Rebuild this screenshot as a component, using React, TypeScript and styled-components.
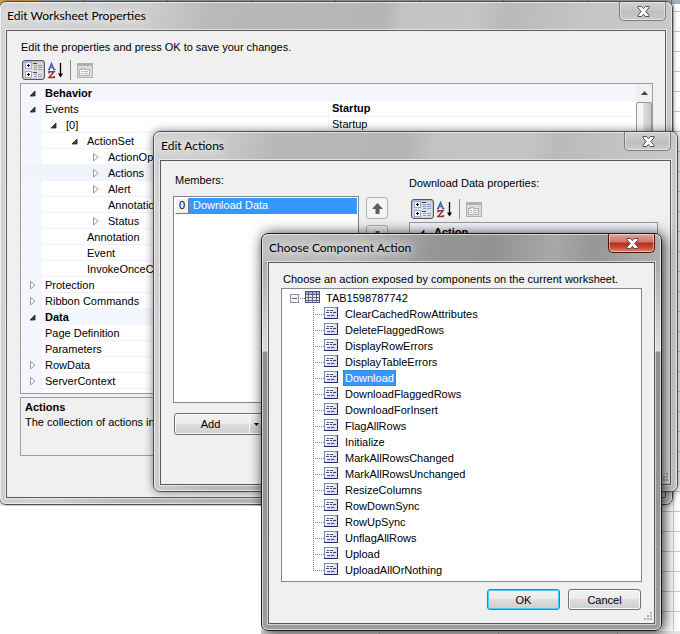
import React from 'react';
import styled, { createGlobalStyle, css } from 'styled-components';

const Global = createGlobalStyle`
  *, *::before, *::after { box-sizing: border-box; }
  body {
    margin: 0;
    font: 11px/14px "Liberation Sans", Arial, sans-serif;
    color: #000;
    overflow: hidden;
  }
  button { font: inherit; color: inherit; padding: 0; margin: 0; }
  ul { list-style: none; margin: 0; padding: 0; }
  svg { display: block; flex: none; }
`;

/* ---------- desktop ---------- */

const Desktop = styled.main`
  position: relative;
  min-height: 100vh;
  overflow: hidden;
  background:
    linear-gradient(#c3c8da, #c3c8da) calc(100% - 6px) 0 / 1px 100% no-repeat,
    repeating-linear-gradient(to bottom, #fff 0 11px, #c3c8da 11px 12px, #fff 12px 20px);
`;

const SheetHeader = styled.div`
  height: 4px;
  background:
    linear-gradient(to right, #e0a94e 0 40px, transparent 40px),
    repeating-linear-gradient(to right, #a3b0b8 0 83px, #6e7a82 83px 84px);
`;

const SheetBlank = styled.div`
  position: absolute;
  left: 0;
  top: 506px;
  bottom: 0;
  width: 261px;
  background: #fff;
`;

const SheetFooter = styled.div`
  position: absolute;
  left: 261px;
  right: 0;
  bottom: 0;
  height: 3px;
  background: repeating-linear-gradient(to right, #e4e4e4 0 118px, #bbb 118px 119px);
`;

/* ---------- window chrome ---------- */

type Layer = 'back' | 'middle' | 'front';

const layers = {
  back: css`
    left: -1px; right: 7px; top: 1px;
    border-color: #4c4c4c;
    background:
      linear-gradient(100deg, #d4d4d4 0, #cfcfcf 140px, #b9b9b9 210px, #b5b5b5 380px, #c3c3c3 400px, #c5c5c5 470px, #b9b9b9 500px, #c6c6c6 590px, #cbcbcb 100%);
    box-shadow: 0 0 5px rgba(0, 0, 0, 0.45);
  `,
  middle: css`
    left: 153px; right: 2px; top: 131px;
    border-color: #4c4c4c;
    background:
      linear-gradient(100deg, #d2d2d2 0, #cdcdcd 60px, #b8b8b8 120px, #b5b5b5 250px, #c3c3c3 280px, #c4c4c4 370px, #bababa 400px, #c5c5c5 480px, #cbcbcb 100%);
    box-shadow: 0 0 8px rgba(0, 0, 0, 0.5);
  `,
  front: css`
    left: 261px; right: 18px; top: 233px;
    border-color: #1c1c1c;
    background:
      linear-gradient(100deg, #bdbdbd 0, #b9b9b9 100px, #969696 170px, #929292 230px, #a8a8a8 290px, #969696 330px, #b0b0b0 100%) 0 0 / 100% 28px no-repeat,
      linear-gradient(to bottom, #adadad 28px, #dcdcdc 117px, #8f8f8f 118px, #9d9d9d 100%);
    box-shadow: 2px 1px 14px rgba(0, 0, 0, 0.85);
  `,
};

const Frame = styled.section<{ $layer: Layer }>`
  position: absolute;
  display: flex;
  flex-direction: column;
  border: 1px solid;
  border-radius: 7px;
  ${(p) => layers[p.$layer]}
`;

const FrameInner = styled.div`
  display: flex;
  flex-direction: column;
  padding: 0 6px 6px;
  border-radius: 6px;
  box-shadow: inset 0 0 0 1px rgba(255, 255, 255, 0.6);
`;

const TitleBar = styled.header`
  display: flex;
  justify-content: space-between;
  align-items: flex-start;
  height: 28px;
  padding-left: 1px;
`;

const Title = styled.h1`
  margin: 0;
  font: 12px/28px Lato, "Open Sans", sans-serif;
  text-shadow: 0 0 8px #fff, 0 0 10px #fff;
  white-space: nowrap;
`;

const CloseButton = styled.button<{ $active?: boolean }>`
  display: flex;
  align-items: center;
  justify-content: center;
  width: 47px;
  height: 19px;
  padding-left: 2px;
  border: 1px solid ${(p) => (p.$active ? '#4a1812' : '#7d7d7d')};
  border-top: 0;
  border-radius: 0 0 5px 5px;
  background: ${(p) =>
    p.$active
      ? 'linear-gradient(#e0a296 0, #cf7565 8px, #b5301a 9px, #c8442c 13px, #e08a6c 18px)'
      : 'linear-gradient(#cfcfcf, #c4c4c4 50%, #bebebe 51%, #cbcbcb)'};
  box-shadow: inset 0 0 0 1px rgba(255, 255, 255, 0.45);
`;

const Client = styled.div`
  position: relative;
  display: flex;
  flex-direction: column;
  border: 1px solid #5a5a5a;
  outline: 1px solid rgba(255, 255, 255, 0.55);
  background: #f0f0f0;
`;

const Grip = styled.svg`
  position: absolute;
  right: 1px;
  bottom: 1px;
`;

const CloseGlyph = () => (
  <svg width="13" height="11" viewBox="0 0 13 11">
    <path d="M1 .5h3.600l1.900 2.200L8.400.5H12v1.300L8.800 5.500 12 9.200v1.300H8.400L6.500 8.300 4.600 10.500H1V9.200l3.200-3.700L1 1.800z" fill="#fff" stroke="#4b5060" strokeWidth="1" strokeLinejoin="round" />
  </svg>
);

const SizeGrip = () => (
  <Grip width="10" height="10" viewBox="0 0 10 10" fill="#b0b0b0">
    <path d="M7 0h2v2H7zM4 3h2v2H4zM7 3h2v2H7zM1 6h2v2H1zM4 6h2v2H4zM7 6h2v2H7z" />
  </Grip>
);

function Dialog(props: { layer: Layer; title: string; grip?: boolean; children: React.ReactNode }) {
  return (
    <Frame $layer={props.layer} role="dialog" aria-label={props.title}>
      <FrameInner>
        <TitleBar>
          <Title>{props.title}</Title>
          <CloseButton $active={props.layer === 'front'} aria-label="Close">
            <CloseGlyph />
          </CloseButton>
        </TitleBar>
        <Client>
          {props.children}
          {props.grip && <SizeGrip />}
        </Client>
      </FrameInner>
    </Frame>
  );
}

/* ---------- property toolbar ---------- */

const Toolbar = styled.div`
  display: flex;
  align-items: center;
  height: 20px;
  padding-left: 2px;
`;

const ToolButton = styled.button<{ $pressed?: boolean }>`
  display: flex;
  align-items: center;
  justify-content: center;
  width: 23px;
  height: 20px;
  border: 1px solid ${(p) => (p.$pressed ? '#55585c' : 'transparent')};
  border-radius: 3px;
  background: ${(p) => (p.$pressed ? 'linear-gradient(#d2d2d2, #ececec)' : 'transparent')};
  box-shadow: ${(p) => (p.$pressed ? 'inset 0 0 2px #777' : 'none')};
`;

const ToolDivider = styled.span`
  width: 1px;
  height: 20px;
  margin: 0 2px;
  background: #8c8c8c;
`;

const PropertyToolbar = () => (
  <Toolbar role="toolbar">
    <ToolButton $pressed aria-label="Categorized">
      <svg width="17" height="16" viewBox="0 0 17 16" shapeRendering="crispEdges">
        <path d="M.5.500h6v6h-6zM.5 9.500h6v6h-6z" fill="#fff" stroke="#8fb0dc" />
        <path d="M2 3.500h3M3.500 2v3M2 12.500h3M3.500 11v3" stroke="#000" />
        <path d="M8 1.500h4M8 10.500h4" stroke="#444" />
        <path d="M9 3.500h3M13 3.500h4M9 5.500h3M13 5.500h4M9 7.500h3M13 7.500h4M9 12.500h3M13 12.500h4M9 14.500h3M13 14.500h4" stroke="#8b9fc2" />
      </svg>
    </ToolButton>
    <ToolButton aria-label="Alphabetical">
      <svg width="19" height="17" viewBox="0 0 19 17" fill="none">
        <path d="M2 7.500 4.500 1.500l2.500 6M3 5.500h3M1 7.500h2M6 7.500h2.500" stroke="#3d62ad" strokeWidth="1.400" />
        <path d="M2 11.500V9.700h5L2 15.600h5.300V14" stroke="#9c2f35" strokeWidth="1.500" />
        <path d="M13.500 1v12" stroke="#000" strokeWidth="1.300" />
        <path d="M11 11.500h5l-2.500 4z" fill="#000" />
      </svg>
    </ToolButton>
    <ToolDivider />
    <ToolButton aria-label="Property Pages" disabled>
      <svg width="16" height="15" viewBox="0 0 16 15" shapeRendering="crispEdges">
        <path d="M.5.500h15v14H.500z" fill="#dcdcdc" stroke="#b0b0b0" />
        <path d="M1 2h14" stroke="#b0b0b0" strokeWidth="2" />
        <path d="M2.500 6.500h2v-1h3v1h5v6h-10z" fill="#f3f3f3" stroke="#b0b0b0" />
        <path d="M4 8.500h2M7 8.500h4M4 10.500h2M7 10.500h4" stroke="#b8b8b8" />
      </svg>
    </ToolButton>
  </Toolbar>
);

/* ---------- property grid ---------- */

const GridBox = styled.div`
  display: flex;
  align-items: flex-start;
  border: 1px solid #9a9ca0;
  background: #f3f6fc;
  overflow: hidden;
`;

const MainGridBox = styled(GridBox)`
  height: 311px;
`;

const SideGridBox = styled(GridBox)`
  flex: 1;
`;

const PropTable = styled.table`
  flex: 1;
  margin-top: 1px;
  table-layout: fixed;
  border-spacing: 0;
`;

const Cell = styled.td<{ $tone: 'plain' | 'category' | 'selected' }>`
  height: 16px;
  padding: 0;
  border-bottom: 1px solid ${(p) => (p.$tone === 'category' ? '#f3f6fc' : '#eff3fa')};
  background: ${(p) => (p.$tone === 'plain' ? '#fff' : p.$tone === 'category' ? '#f3f6fc' : '#f1f4fa')};
  white-space: nowrap;
  overflow: hidden;
`;

const NameCell = styled(Cell)`
  width: 307px;
  ${(p) =>
    p.$tone === 'plain' &&
    css`
      background: linear-gradient(to right, #f3f6fc 21px, #fff 21px);
    `}
`;

const ValueCell = styled(Cell)<{ $bold?: boolean }>`
  padding-left: 3px;
  border-left: 1px solid #eff3fa;
  font-weight: ${(p) => (p.$bold ? 700 : 400)};
  line-height: 15px;
`;

const NameLine = styled.div<{ $depth: number; $bold?: boolean }>`
  display: flex;
  align-items: center;
  height: 15px;
  padding-left: ${(p) => 6 + p.$depth * 21}px;
  font-weight: ${(p) => (p.$bold ? 700 : 400)};
`;

const Toggle = styled.button`
  width: 12px;
  height: 12px;
  border: 0;
  background: none;
`;

const ToggleSlot = styled.span`
  display: flex;
  align-items: center;
  width: 18px;
  height: 15px;
`;

const Expander = ({ open }: { open: boolean }) => (
  <Toggle aria-expanded={open} aria-label={open ? 'Collapse' : 'Expand'}>
    <svg width="12" height="12" viewBox="0 0 12 12">
      {open ? (
        <path d="M3 9 8 4V9z" fill="#404040" stroke="#222" strokeWidth=".8" />
      ) : (
        <path d="M3.500 2.500v7.500L8 6.200z" fill="#fff" stroke="#9a9a9a" />
      )}
    </svg>
  </Toggle>
);

type Prop = { name: string; depth?: number; open?: boolean; kind?: 'category' | 'selected'; value?: string; strong?: boolean };

const properties: Prop[] = [
  { name: 'Behavior', open: true, kind: 'category' },
  { name: 'Events', open: true, value: 'Startup', strong: true },
  { name: '[0]', depth: 1, open: true, value: 'Startup' },
  { name: 'ActionSet', depth: 2, open: true },
  { name: 'ActionOptions', depth: 3, open: false },
  { name: 'Actions', depth: 3, open: false, kind: 'selected' },
  { name: 'Alert', depth: 3, open: false },
  { name: 'Annotation', depth: 3 },
  { name: 'Status', depth: 3, open: false },
  { name: 'Annotation', depth: 2 },
  { name: 'Event', depth: 2 },
  { name: 'InvokeOnceCondition', depth: 2 },
  { name: 'Protection', open: false },
  { name: 'Ribbon Commands', open: false },
  { name: 'Data', open: true, kind: 'category' },
  { name: 'Page Definition' },
  { name: 'Parameters' },
  { name: 'RowData', open: false },
  { name: 'ServerContext', open: false },
  { name: 'ServerActionID' },
];

const PropertyTable = ({ rows }: { rows: Prop[] }) => (
  <PropTable>
    <tbody>
      {rows.map((row, i) => {
        const tone = row.kind ?? 'plain';
        return (
          <tr key={i}>
            <NameCell $tone={tone}>
              <NameLine $depth={row.depth ?? 0} $bold={row.kind === 'category'}>
                <ToggleSlot>{row.open !== undefined && <Expander open={row.open} />}</ToggleSlot>
                {row.name}
              </NameLine>
            </NameCell>
            {row.kind === 'category' ? (
              <Cell $tone={tone} />
            ) : (
              <ValueCell $tone="plain" $bold={row.strong}>
                {row.value}
              </ValueCell>
            )}
          </tr>
        );
      })}
    </tbody>
  </PropTable>
);

const ScrollTrack = styled.div`
  display: flex;
  flex-direction: column;
  align-self: stretch;
  width: 16px;
  background: #f0f0f0;
`;

const ScrollArrow = styled.button`
  display: flex;
  align-items: center;
  justify-content: center;
  height: 18px;
  border: 0;
  background: none;
`;

const ScrollThumb = styled.div`
  flex: 0 0 120px;
  border: 1px solid #979797;
  border-radius: 2px;
  background: linear-gradient(to right, #f5f5f5 40%, #dcdcdc 50%, #c8c8c8);
`;

/* ---------- worksheet properties dialog ---------- */

const WorksheetBody = styled.div`
  display: flex;
  flex-direction: column;
  padding: 9px 12px 41px 13px;
`;

const Intro = styled.p`
  margin: 0 0 6px;
  padding-left: 1px;
`;

const ToolbarGap = styled.div`
  height: 3px;
`;

const HelpBox = styled.div`
  height: 59px;
  margin-top: 3px;
  padding: 2px 4px;
  border: 1px solid #9a9ca0;
  overflow: hidden;
`;

const HelpTitle = styled.h2`
  margin: 0;
  font-size: 11px;
  line-height: 14px;
`;

const HelpText = styled.p`
  margin: 0;
  line-height: 16px;
`;

/* ---------- edit actions dialog ---------- */

const ActionsBody = styled.div`
  display: grid;
  grid-template-columns: 186px 22px minmax(0, 1fr);
  column-gap: 7px;
  padding: 12px 12px 49px;
`;

const MembersColumn = styled.div`
  display: flex;
  flex-direction: column;
  align-items: flex-start;
`;

const MemberLabel = styled.span`
  padding-left: 2px;
  margin-bottom: 9px;
`;

const MemberList = styled.ul`
  &[role='listbox'] {
    align-self: stretch;
    height: 207px;
    padding: 1px;
    border: 1px solid #82858f;
  }
  background: #fff;
`;

const MemberItem = styled.li`
  display: flex;
  height: 16px;
  background: #3399ff;
  color: #fff;
  line-height: 15px;
`;

const MemberIndex = styled.span`
  width: 14px;
  margin-right: 4px;
  border: 1px solid;
  border-color: #fff #777 #777 #fff;
  background: #f0f0f0;
  color: #000;
  line-height: 13px;
  text-align: center;
`;

const raised = css`
  border: 1px solid #707070;
  border-radius: 3px;
  background: linear-gradient(#f2f2f2, #ebebeb 48%, #dddddd 50%, #cfcfcf);
  box-shadow: inset 0 0 0 1px #fbfbfb;
`;

const SplitButton = styled.div`
  display: flex;
  width: 89px;
  height: 22px;
  margin: 10px 0 0 1px;
  ${raised}
`;

const SplitMain = styled.button`
  flex: 1;
  padding-right: 3px;
  border: 0;
  background: none;
`;

const SplitArrow = styled.button`
  display: flex;
  align-items: center;
  justify-content: center;
  width: 13px;
  border: 0;
  border-left: 1px solid #fff;
  background: none;
`;

const MoveColumn = styled.div`
  display: flex;
  flex-direction: column;
  gap: 6px;
  padding-top: 24px;
`;

const MoveButton = styled.button`
  display: flex;
  align-items: center;
  justify-content: center;
  height: 22px;
  border: 1px solid #adb2b5;
  border-radius: 3px;
  background: #f4f4f4;
`;

const SideColumn = styled.div`
  display: flex;
  flex-direction: column;
  padding: 3px 0 0 14px;
`;

const SideLabel = styled.span`
  margin-bottom: 9px;
`;

/* ---------- component action dialog ---------- */

const ChooseBody = styled.div`
  display: flex;
  flex-direction: column;
  padding: 9px 12px 13px;
`;

const ChooseLabel = styled.span`
  padding-left: 2px;
  margin-bottom: 2px;
`;

const Tree = styled.ul`
  border: 1px solid #828790;
  background: #fff;

  &[role='tree'] {
    padding: 1px 0 3px 8px;
  }
`;

const TreeRow = styled.div`
  display: flex;
  align-items: center;
  height: 16px;
  line-height: 16px;
`;

const Branch = styled.ul`
  && {
    padding-left: 23px;
  }
`;

const NodeLabel = styled.span<{ $root?: boolean; $selected?: boolean }>`
  margin-left: ${(p) => (p.$root ? 3 : 4)}px;
  padding: 0 1px;
  border: 1px solid transparent;
  line-height: 14px;
  ${(p) =>
    p.$selected &&
    css`
      border: 1px dotted #b8641c;
      background: #3399ff;
      color: #fff;
    `}
`;

const DialogButtons = styled.div`
  display: flex;
  justify-content: flex-end;
  gap: 8px;
  margin-top: 7px;
  padding-right: 1px;
`;

const PushButton = styled.button<{ $default?: boolean }>`
  ${raised}
  width: 73px;
  height: 21px;
  ${(p) =>
    p.$default &&
    css`
      border-color: #3c7fb1;
      box-shadow: inset 0 0 0 1px #48d0f8;
    `}
`;

const RootIcon = () => (
  <svg width="31" height="16" viewBox="0 0 31 16" shapeRendering="crispEdges">
    <rect x=".5" y="4.500" width="8" height="8" rx="1" fill="#f4f4f4" stroke="#919191" />
    <path d="M2 8.500h5" stroke="#4b63a7" />
    <path d="M10 8.500h5" stroke="#808080" strokeDasharray="1 1" />
    <path d="M15.500 1.500h14v11h-14z" fill="#e8e8f2" stroke="#4f4f80" />
    <path d="M16 2h13v2H16z" fill="#a8a8ba" />
    <path d="M16 4.500h13M16 7.500h13M16 10.500h13M18.500 2v11M22.500 2v11M26.500 2v11" stroke="#62628e" />
  </svg>
);

const ActionIcon = ({ last }: { last: boolean }) => (
  <svg width="26" height="16" viewBox="0 0 26 16" shapeRendering="crispEdges">
    <path d={last ? 'M.500 0v9' : 'M.500 0v16'} stroke="#808080" strokeDasharray="1 1" />
    <path d="M2 8.500h9" stroke="#808080" strokeDasharray="1 1" />
    <path d="M12 2h12v11H12z" fill="#d3dcfa" />
    <path d="M12 2h10l-7 9h-3z" fill="#f6f8ff" />
    <path d="M11.500 13V1.500H24" fill="none" stroke="#8387bd" />
    <path d="M11 12.500h13.500M24.500 1v12" fill="none" stroke="#27275f" />
    <path d="M14 4.500h2M17 4.500h3M13 6.500h3M17 6.500h2M20 6.500h3M14 9.500h3M18 9.500h3" stroke="#44446c" />
  </svg>
);

const actions = [
  'ClearCachedRowAttributes', 'DeleteFlaggedRows', 'DisplayRowErrors', 'DisplayTableErrors', 'Download',
  'DownloadFlaggedRows', 'DownloadForInsert', 'FlagAllRows', 'Initialize', 'MarkAllRowsChanged',
  'MarkAllRowsUnchanged', 'ResizeColumns', 'RowDownSync', 'RowUpSync', 'UnflagAllRows', 'Upload',
  'UploadAllOrNothing',
];

export default function App() {
  return (
    <Desktop>
      <Global />
      <SheetHeader />

      <Dialog layer="back" title="Edit Worksheet Properties">
        <WorksheetBody>
          <Intro>Edit the properties and press OK to save your changes.</Intro>
          <PropertyToolbar />
          <ToolbarGap />
          <MainGridBox>
            <PropertyTable rows={properties} />
            <ScrollTrack>
              <ScrollArrow aria-label="Scroll up">
                <svg width="7" height="4" viewBox="0 0 7 4">
                  <path d="M0 4 3.500 0 7 4z" fill="#444" />
                </svg>
              </ScrollArrow>
              <ScrollThumb />
            </ScrollTrack>
          </MainGridBox>
          <HelpBox>
            <HelpTitle>Actions</HelpTitle>
            <HelpText>The collection of actions in the set.</HelpText>
          </HelpBox>
        </WorksheetBody>
      </Dialog>

      <Dialog layer="middle" title="Edit Actions" grip>
        <ActionsBody>
          <MembersColumn>
            <MemberLabel id="members">Members:</MemberLabel>
            <MemberList role="listbox" aria-labelledby="members">
              <MemberItem role="option" aria-selected>
                <MemberIndex>0</MemberIndex>
                Download Data
              </MemberItem>
            </MemberList>
            <SplitButton>
              <SplitMain>Add</SplitMain>
              <SplitArrow aria-label="Add options">
                <svg width="5" height="3" viewBox="0 0 5 3">
                  <path d="M0 0h5L2.500 3z" />
                </svg>
              </SplitArrow>
            </SplitButton>
          </MembersColumn>
          <MoveColumn>
            <MoveButton aria-label="Move up">
              <svg width="11" height="11" viewBox="0 0 11 11">
                <path d="M5.500 0 11 6H7.500v5h-4V6H0z" fill="#5d5d5d" />
              </svg>
            </MoveButton>
            <MoveButton aria-label="Move down">
              <svg width="11" height="11" viewBox="0 0 11 11">
                <path d="M5.500 11 11 5H7.500V0h-4v5H0z" fill="#5d5d5d" />
              </svg>
            </MoveButton>
          </MoveColumn>
          <SideColumn>
            <SideLabel>Download Data properties:</SideLabel>
            <PropertyToolbar />
            <ToolbarGap />
            <SideGridBox>
              <PropertyTable rows={[{ name: 'Action', open: true, kind: 'category' }]} />
            </SideGridBox>
          </SideColumn>
        </ActionsBody>
      </Dialog>

      <SheetFooter />

      <Dialog layer="front" title="Choose Component Action" grip>
        <ChooseBody>
          <ChooseLabel id="choose">Choose an action exposed by components on the current worksheet.</ChooseLabel>
          <Tree role="tree" aria-labelledby="choose">
            <li role="treeitem" aria-expanded>
              <TreeRow>
                <RootIcon />
                <NodeLabel $root>TAB1598787742</NodeLabel>
              </TreeRow>
              <Branch role="group">
                {actions.map((name, i) => (
                  <li key={name} role="treeitem" aria-selected={name === 'Download'}>
                    <TreeRow>
                      <ActionIcon last={i === actions.length - 1} />
                      <NodeLabel $selected={name === 'Download'}>{name}</NodeLabel>
                    </TreeRow>
                  </li>
                ))}
              </Branch>
            </li>
          </Tree>
          <DialogButtons>
            <PushButton $default>OK</PushButton>
            <PushButton>Cancel</PushButton>
          </DialogButtons>
        </ChooseBody>
      </Dialog>

      <SheetBlank />
    </Desktop>
  );
}
